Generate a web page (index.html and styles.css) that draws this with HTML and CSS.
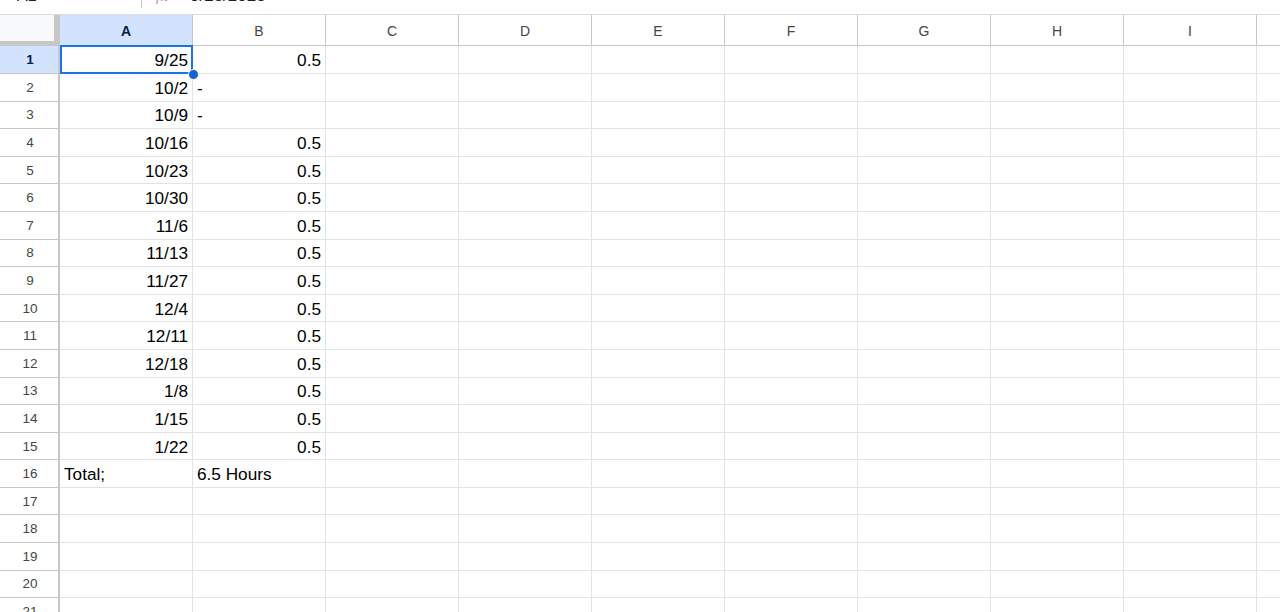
FILE: index.html
```html
<!DOCTYPE html>
<html>
<head>
<meta charset="utf-8">
<link rel="stylesheet" href="styles.css">
</head>
<body>
<div class="fbar">
  <div class="fbar-in">
    <span class="namebox">A1</span>
    <span class="sep"></span>
    <span class="fx"><i>f</i>x</span>
    <span class="fval">9/25/2025</span>
  </div>
</div>
<div class="sheet">
  <div class="row head">
    <div class="corner"></div>
    <div class="ch sel-h">A</div><div class="ch">B</div><div class="ch">C</div><div class="ch">D</div><div class="ch">E</div><div class="ch">F</div><div class="ch">G</div><div class="ch">H</div><div class="ch">I</div><div class="ch">J</div>
  </div>
  <div class="row"><div class="rh sel-h">1</div><div class="c r sel">9/25<span class="handle"></span></div><div class="c r">0.5</div><div class="c"></div><div class="c"></div><div class="c"></div><div class="c"></div><div class="c"></div><div class="c"></div><div class="c"></div><div class="c"></div></div>
  <div class="row"><div class="rh">2</div><div class="c r">10/2</div><div class="c">-</div><div class="c"></div><div class="c"></div><div class="c"></div><div class="c"></div><div class="c"></div><div class="c"></div><div class="c"></div><div class="c"></div></div>
  <div class="row"><div class="rh">3</div><div class="c r">10/9</div><div class="c">-</div><div class="c"></div><div class="c"></div><div class="c"></div><div class="c"></div><div class="c"></div><div class="c"></div><div class="c"></div><div class="c"></div></div>
  <div class="row"><div class="rh">4</div><div class="c r">10/16</div><div class="c r">0.5</div><div class="c"></div><div class="c"></div><div class="c"></div><div class="c"></div><div class="c"></div><div class="c"></div><div class="c"></div><div class="c"></div></div>
  <div class="row"><div class="rh">5</div><div class="c r">10/23</div><div class="c r">0.5</div><div class="c"></div><div class="c"></div><div class="c"></div><div class="c"></div><div class="c"></div><div class="c"></div><div class="c"></div><div class="c"></div></div>
  <div class="row"><div class="rh">6</div><div class="c r">10/30</div><div class="c r">0.5</div><div class="c"></div><div class="c"></div><div class="c"></div><div class="c"></div><div class="c"></div><div class="c"></div><div class="c"></div><div class="c"></div></div>
  <div class="row"><div class="rh">7</div><div class="c r">11/6</div><div class="c r">0.5</div><div class="c"></div><div class="c"></div><div class="c"></div><div class="c"></div><div class="c"></div><div class="c"></div><div class="c"></div><div class="c"></div></div>
  <div class="row"><div class="rh">8</div><div class="c r">11/13</div><div class="c r">0.5</div><div class="c"></div><div class="c"></div><div class="c"></div><div class="c"></div><div class="c"></div><div class="c"></div><div class="c"></div><div class="c"></div></div>
  <div class="row"><div class="rh">9</div><div class="c r">11/27</div><div class="c r">0.5</div><div class="c"></div><div class="c"></div><div class="c"></div><div class="c"></div><div class="c"></div><div class="c"></div><div class="c"></div><div class="c"></div></div>
  <div class="row"><div class="rh">10</div><div class="c r">12/4</div><div class="c r">0.5</div><div class="c"></div><div class="c"></div><div class="c"></div><div class="c"></div><div class="c"></div><div class="c"></div><div class="c"></div><div class="c"></div></div>
  <div class="row"><div class="rh">11</div><div class="c r">12/11</div><div class="c r">0.5</div><div class="c"></div><div class="c"></div><div class="c"></div><div class="c"></div><div class="c"></div><div class="c"></div><div class="c"></div><div class="c"></div></div>
  <div class="row"><div class="rh">12</div><div class="c r">12/18</div><div class="c r">0.5</div><div class="c"></div><div class="c"></div><div class="c"></div><div class="c"></div><div class="c"></div><div class="c"></div><div class="c"></div><div class="c"></div></div>
  <div class="row"><div class="rh">13</div><div class="c r">1/8</div><div class="c r">0.5</div><div class="c"></div><div class="c"></div><div class="c"></div><div class="c"></div><div class="c"></div><div class="c"></div><div class="c"></div><div class="c"></div></div>
  <div class="row"><div class="rh">14</div><div class="c r">1/15</div><div class="c r">0.5</div><div class="c"></div><div class="c"></div><div class="c"></div><div class="c"></div><div class="c"></div><div class="c"></div><div class="c"></div><div class="c"></div></div>
  <div class="row"><div class="rh">15</div><div class="c r">1/22</div><div class="c r">0.5</div><div class="c"></div><div class="c"></div><div class="c"></div><div class="c"></div><div class="c"></div><div class="c"></div><div class="c"></div><div class="c"></div></div>
  <div class="row"><div class="rh">16</div><div class="c">Total;</div><div class="c">6.5 Hours</div><div class="c"></div><div class="c"></div><div class="c"></div><div class="c"></div><div class="c"></div><div class="c"></div><div class="c"></div><div class="c"></div></div>
  <div class="row"><div class="rh">17</div><div class="c"></div><div class="c"></div><div class="c"></div><div class="c"></div><div class="c"></div><div class="c"></div><div class="c"></div><div class="c"></div><div class="c"></div><div class="c"></div></div>
  <div class="row"><div class="rh">18</div><div class="c"></div><div class="c"></div><div class="c"></div><div class="c"></div><div class="c"></div><div class="c"></div><div class="c"></div><div class="c"></div><div class="c"></div><div class="c"></div></div>
  <div class="row"><div class="rh">19</div><div class="c"></div><div class="c"></div><div class="c"></div><div class="c"></div><div class="c"></div><div class="c"></div><div class="c"></div><div class="c"></div><div class="c"></div><div class="c"></div></div>
  <div class="row"><div class="rh">20</div><div class="c"></div><div class="c"></div><div class="c"></div><div class="c"></div><div class="c"></div><div class="c"></div><div class="c"></div><div class="c"></div><div class="c"></div><div class="c"></div></div>
  <div class="row"><div class="rh">21</div><div class="c"></div><div class="c"></div><div class="c"></div><div class="c"></div><div class="c"></div><div class="c"></div><div class="c"></div><div class="c"></div><div class="c"></div><div class="c"></div></div>
</div>
</body>
</html>
```
FILE: styles.css
```css
html, body {
  margin: 0;
  padding: 0;
  background: #ffffff;
  overflow: hidden;
  width: 1280px;
  height: 612px;
  font-family: "Liberation Sans", Arial, sans-serif;
}

.fbar {
  height: 14px;
  border-bottom: 1px solid #dadce0;
  overflow: hidden;
}

.fbar-in {
  display: flex;
  align-items: flex-start;
  margin-top: -12px;
  height: 22px;
  color: #1f1f1f;
}

.namebox {
  font-size: 16px;
  line-height: 16px;
  margin-left: 17px;
  width: 124px;
}

.sep {
  width: 1px;
  height: 20px;
  background: #c4c7c5;
}

.fx {
  font-size: 15px;
  line-height: 16px;
  color: #9aa0a6;
  margin-left: 14px;
  width: 34px;
  font-family: "Liberation Serif", serif;
}

.fval {
  font-size: 17px;
  line-height: 16px;
}

.sheet {
  display: flex;
  flex-direction: column;
}

.row {
  display: grid;
  grid-template-columns: 60px repeat(10, 133px);
  height: 27.6px;
}

.row.head {
  height: 31.4px;
}

.corner {
  background: #f8f9fa;
  border-right: 6px solid #c7c7c7;
  border-bottom: 5px solid #c7c7c7;
  box-sizing: border-box;
}

.ch {
  display: flex;
  align-items: center;
  justify-content: center;
  font-size: 14px;
  color: #444746;
  border-right: 1px solid #c7c7c7;
  border-bottom: 1px solid #c7c7c7;
  box-sizing: border-box;
  padding-top: 1px;
}

.rh {
  display: flex;
  align-items: center;
  justify-content: center;
  font-size: 13.5px;
  color: #444746;
  border-right: 2px solid #c7c7c7;
  border-bottom: 1px solid #c7c7c7;
  box-sizing: border-box;
  padding-left: 2px;
}

.sel-h {
  background: #d3e3fd;
  color: #041e49;
  font-weight: bold;
}

.c {
  position: relative;
  display: flex;
  align-items: center;
  padding: 2px 4px 0 4px;
  font-size: 17.2px;
  color: #000000;
  border-right: 1px solid #e2e3e3;
  border-bottom: 1px solid #e2e3e3;
  box-sizing: border-box;
  white-space: nowrap;
}

.c.r {
  justify-content: flex-end;
}

.sel::after {
  content: "";
  position: absolute;
  left: 0;
  top: -1px;
  right: -1px;
  bottom: -1px;
  border: 2px solid #1a73e8;
  pointer-events: none;
}

.handle {
  position: absolute;
  right: -7px;
  bottom: -7px;
  width: 11px;
  height: 11px;
  border-radius: 50%;
  background: #1a5fd6;
  border: 1px solid #ffffff;
  box-sizing: border-box;
  z-index: 2;
}
```
